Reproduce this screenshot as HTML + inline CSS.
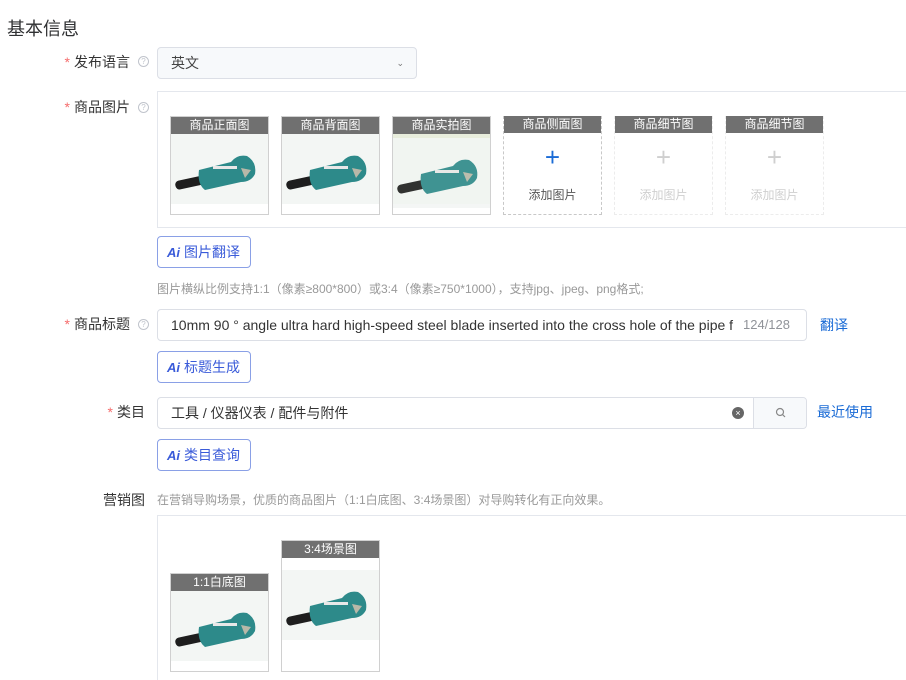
<!DOCTYPE html>
<html><head><meta charset="utf-8"><style>
*{box-sizing:border-box;margin:0;padding:0}
html,body{width:906px;height:680px;overflow:hidden}
body{background:#fff;font-family:"Liberation Sans","Noto Sans CJK SC",sans-serif;color:#333;position:relative}
.a{position:absolute}
.lbl{position:absolute;font-size:14px;color:#333;text-align:right;width:130px;left:0}
.lbl .s{color:#f56c6c;margin-right:4px}
.q{position:absolute;width:11px;height:11px;border:1px solid #c0c4cc;border-radius:50%;font-size:8px;color:#c0c4cc;text-align:center;line-height:9px}
.box{position:absolute;border:1px solid #e4e7ed}
.slot{position:absolute;width:99px;border:1px solid #d0d0d0}
.hd{height:17px;background:#707070;color:#fff;font-size:12px;text-align:center;line-height:17px}
.add{border:1px dashed #c8c8c8}
.add.d{border-color:#ececec}
.plus{position:absolute;left:0;right:0;text-align:center;font-size:26px;line-height:26px;top:28px;color:#1a6bd6;font-weight:300}
.addt{position:absolute;left:0;right:0;text-align:center;font-size:12px;top:70px;color:#555}
.d .plus{color:#cfcfcf}.d .addt{color:#cfcfcf}
.ai{position:absolute;left:157px;width:94px;height:32px;border:1px solid #8aa0e6;border-radius:4px;font-size:14px;color:#3a5bd9;line-height:30px;padding-left:9px}
.ai b{font-style:italic;font-weight:bold;margin-right:4px;font-size:13px}
.inp{position:absolute;left:157px;width:650px;height:32px;border:1px solid #dcdfe6;border-radius:4px;font-size:14px;line-height:30px;padding-left:13px;color:#333}
.link{position:absolute;font-size:14px;color:#1a6bd6}
</style></head><body>
<svg width="0" height="0" style="position:absolute"><defs>
<g id="p">
<rect width="97" height="70" fill="#f3f6f4"/>
<rect x="4" y="44" width="30" height="9" rx="4" fill="#1e1e1e" transform="rotate(-12 20 48)"/>
<path d="M28 36 L60 28 Q66 20 76 22 Q86 28 84 40 Q80 48 70 48 L34 56 Q26 50 28 36Z" fill="#2d8a8a"/>
<path d="M70 34 L80 36 L74 44Z" fill="#b8b8a8"/>
<rect x="42" y="32" width="24" height="3" fill="#e8e8e8"/>
</g></defs></svg>

<div class="a" style="left:7px;top:15px;font-size:18px;color:#303133">基本信息</div>

<div class="lbl" style="top:52px"><span class="s">*</span>发布语言</div>
<div class="q" style="left:138px;top:56px">?</div>
<div class="a" style="left:157px;top:47px;width:260px;height:32px;border:1px solid #dcdfe6;border-radius:4px;background:#f7f9fb;font-size:14px;line-height:30px;padding-left:13px;color:#444">英文<span style="position:absolute;right:12px;top:0;font-size:9px;color:#777">&#8964;</span></div>

<div class="lbl" style="top:97px"><span class="s">*</span>商品图片</div>
<div class="q" style="left:138px;top:102px">?</div>
<div class="box" style="left:157px;top:91px;width:760px;height:137px"></div>
<div class="slot" style="left:170px;top:116px;height:99px"><div class="hd">商品正面图</div><svg width="97" height="80"><use href="#p"/></svg></div>
<div class="slot" style="left:281px;top:116px;height:99px"><div class="hd">商品背面图</div><svg width="97" height="80"><use href="#p"/></svg></div>
<div class="slot" style="left:392px;top:116px;height:99px"><div class="hd">商品实拍图</div><svg width="97" height="80"><rect width="97" height="70" fill="#e8eddc"/><use href="#p" transform="translate(0,4)" opacity=".9"/></svg></div>
<div class="slot add" style="left:503px;top:116px;height:99px;border-top:none"><div class="hd">商品侧面图</div><div class="plus">+</div><div class="addt">添加图片</div></div>
<div class="slot add d" style="left:614px;top:116px;height:99px;border-top:none"><div class="hd">商品细节图</div><div class="plus">+</div><div class="addt">添加图片</div></div>
<div class="slot add d" style="left:725px;top:116px;height:99px;border-top:none"><div class="hd">商品细节图</div><div class="plus">+</div><div class="addt">添加图片</div></div>

<div class="ai" style="top:236px"><b>Ai</b>图片翻译</div>
<div class="a" style="left:157px;top:280px;font-size:12px;color:#999">图片横纵比例支持1:1（像素≥800*800）或3:4（像素≥750*1000），支持jpg、jpeg、png格式;</div>

<div class="lbl" style="top:314px"><span class="s">*</span>商品标题</div>
<div class="q" style="left:138px;top:319px">?</div>
<div class="inp" style="top:309px;overflow:hidden;white-space:nowrap;padding-right:70px">10mm 90 ° angle ultra hard high-speed steel blade inserted into the cross hole of the pipe f<span style="position:absolute;right:16px;top:0;color:#909399;font-size:13px;background:#fff;padding-left:8px">124/128</span></div>
<div class="link" style="left:820px;top:315px">翻译</div>
<div class="ai" style="top:351px"><b>Ai</b>标题生成</div>

<div class="lbl" style="top:402px;width:145px"><span class="s">*</span>类目</div>
<div class="inp" style="top:397px">工具 / 仪器仪表 / 配件与附件
<span style="position:absolute;left:574px;top:9px;width:12px;height:12px;border-radius:50%;background:#666;color:#fff;font-size:9px;line-height:12px;text-align:center">×</span>
<span style="position:absolute;right:0;top:0;width:53px;height:30px;border-left:1px solid #dcdfe6;background:#f7f9fb;border-radius:0 4px 4px 0"><svg width="53" height="30"><circle cx="26" cy="14" r="3.5" fill="none" stroke="#888" stroke-width="1.2"/><line x1="28.5" y1="16.5" x2="31" y2="19" stroke="#888" stroke-width="1.2"/></svg></span></div>
<div class="link" style="left:817px;top:402px">最近使用</div>
<div class="ai" style="top:439px"><b>Ai</b>类目查询</div>

<div class="a" style="left:103px;top:490px;font-size:14px;color:#333">营销图</div>
<div class="a" style="left:157px;top:491px;font-size:12px;color:#999">在营销导购场景，优质的商品图片（1:1白底图、3:4场景图）对导购转化有正向效果。</div>
<div class="box" style="left:157px;top:515px;width:760px;height:180px"></div>
<div class="slot" style="left:170px;top:573px;height:99px"><div class="hd">1:1白底图</div><svg width="97" height="80"><use href="#p"/></svg></div>
<div class="slot" style="left:281px;top:540px;height:132px"><div class="hd">3:4场景图</div><svg width="97" height="113"><rect width="97" height="113" fill="#fff"/><use href="#p" transform="translate(0,12)"/></svg></div>
</body></html>
